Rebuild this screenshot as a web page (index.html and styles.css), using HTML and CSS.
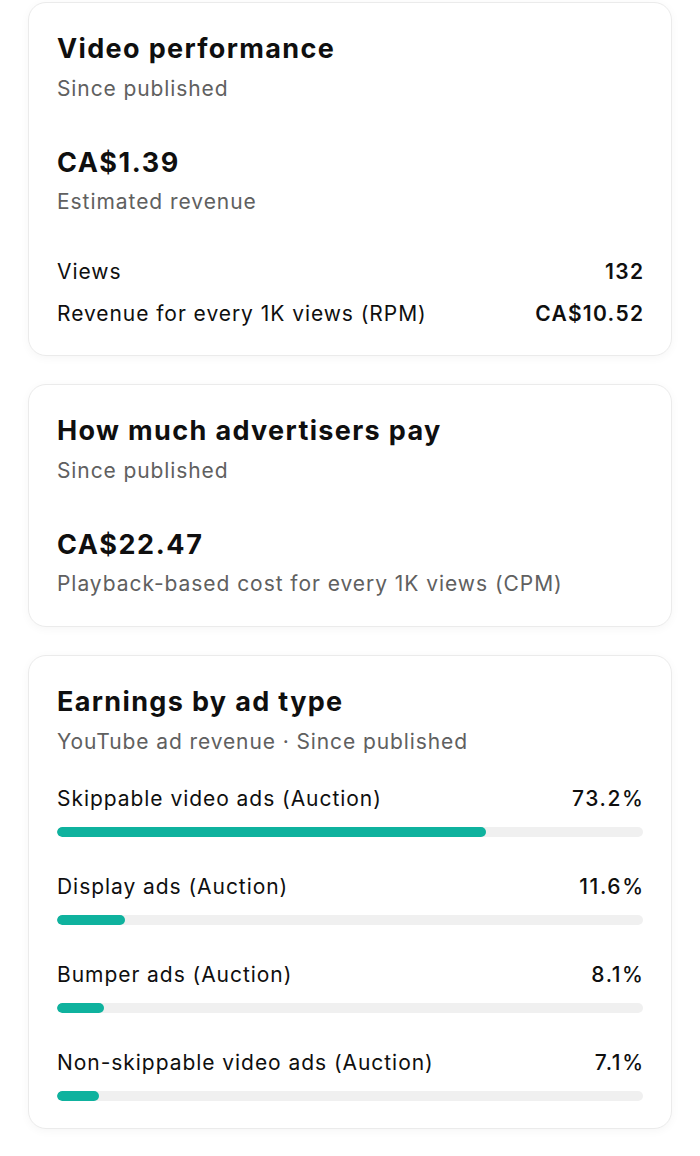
FILE: index.html
```html
<!DOCTYPE html>
<html lang="en">
<head>
    <meta charset="UTF-8">
    <meta name="viewport" content="width=device-width, initial-scale=1.0">
    <title>Video revenue</title>
    <link rel="stylesheet" href="styles.css">
</head>
<body>
    <main class="page">
        <section class="card card-performance">
            <h2 class="card-title">Video performance</h2>
            <p class="card-sub">Since published</p>

            <div class="amount">CA$1.39</div>
            <p class="amount-label">Estimated revenue</p>

            <div class="stats">
                <div class="stat-row">
                    <span>Views</span>
                    <span class="stat-value">132</span>
                </div>
                <div class="stat-row">
                    <span>Revenue for every 1K views (RPM)</span>
                    <span class="stat-value">CA$10.52</span>
                </div>
            </div>
        </section>

        <section class="card card-advertisers">
            <h2 class="card-title">How much advertisers pay</h2>
            <p class="card-sub">Since published</p>

            <div class="amount">CA$22.47</div>
            <p class="amount-label">Playback-based cost for every 1K views (CPM)</p>
        </section>

        <section class="card card-adtype">
            <h2 class="card-title">Earnings by ad type</h2>
            <p class="card-sub">YouTube ad revenue · Since published</p>

            <div class="ad-list">
                <div class="ad-row">
                    <div class="ad-head">
                        <span>Skippable video ads (Auction)</span>
                        <span class="ad-pct">73.2%</span>
                    </div>
                    <div class="bar"><div class="bar-fill" style="width: 73.2%"></div></div>
                </div>
                <div class="ad-row">
                    <div class="ad-head">
                        <span>Display ads (Auction)</span>
                        <span class="ad-pct">11.6%</span>
                    </div>
                    <div class="bar"><div class="bar-fill" style="width: 11.6%"></div></div>
                </div>
                <div class="ad-row">
                    <div class="ad-head">
                        <span>Bumper ads (Auction)</span>
                        <span class="ad-pct">8.1%</span>
                    </div>
                    <div class="bar"><div class="bar-fill" style="width: 8.1%"></div></div>
                </div>
                <div class="ad-row">
                    <div class="ad-head">
                        <span>Non-skippable video ads (Auction)</span>
                        <span class="ad-pct">7.1%</span>
                    </div>
                    <div class="bar"><div class="bar-fill" style="width: 7.1%"></div></div>
                </div>
            </div>
        </section>
    </main>
</body>
</html>
```

FILE: styles.css
```css
* {
    margin: 0;
    padding: 0;
    box-sizing: border-box;
}

body {
    background-color: #ffffff;
    color: #0f0f0f;
    font-family: Inter, "Noto Sans", "Liberation Sans", sans-serif;
}

.page {
    display: flex;
    flex-direction: column;
    gap: 28px;
    padding: 2px 28px 28px;
}

.card {
    background-color: #fff;
    border: 1px solid #ebebeb;
    border-radius: 18px;
    box-shadow: 0 2px 10px rgba(0, 0, 0, 0.04);
    padding: 30px 28px 27px;
}

.card-title {
    font-size: 27px;
    font-weight: 700;
    line-height: 32px;
    letter-spacing: 1.35px;
}

.card-sub {
    margin-top: 10px;
    font-size: 21px;
    line-height: 28px;
    letter-spacing: 0.9px;
    color: #606060;
}

.amount {
    margin-top: 43px;
    font-size: 27px;
    font-weight: 700;
    line-height: 34px;
    letter-spacing: 1.6px;
}

.amount-label {
    margin-top: 8px;
    font-size: 21px;
    line-height: 28px;
    letter-spacing: 0.95px;
    color: #606060;
}

.stats {
    margin-top: 42px;
    display: flex;
    flex-direction: column;
    gap: 14px;
}

.stat-row,
.ad-head {
    display: flex;
    justify-content: space-between;
    font-size: 21px;
    line-height: 28px;
    letter-spacing: 0.95px;
}

.stat-value {
    font-weight: 600;
    letter-spacing: 1.3px;
    margin-right: -1.3px;
}

.card-advertisers {
    padding-bottom: 28px;
}

.ad-list {
    margin-top: 29px;
    display: flex;
    flex-direction: column;
    gap: 36px;
}

.ad-pct {
    font-weight: 500;
    letter-spacing: 1.6px;
    margin-right: -1.6px;
}

.bar {
    margin-top: 14px;
    height: 10px;
    border-radius: 5px;
    background-color: #f0f0f0;
    overflow: hidden;
}

.bar-fill {
    height: 100%;
    border-radius: 5px;
    background-color: #0fb29e;
}
```
